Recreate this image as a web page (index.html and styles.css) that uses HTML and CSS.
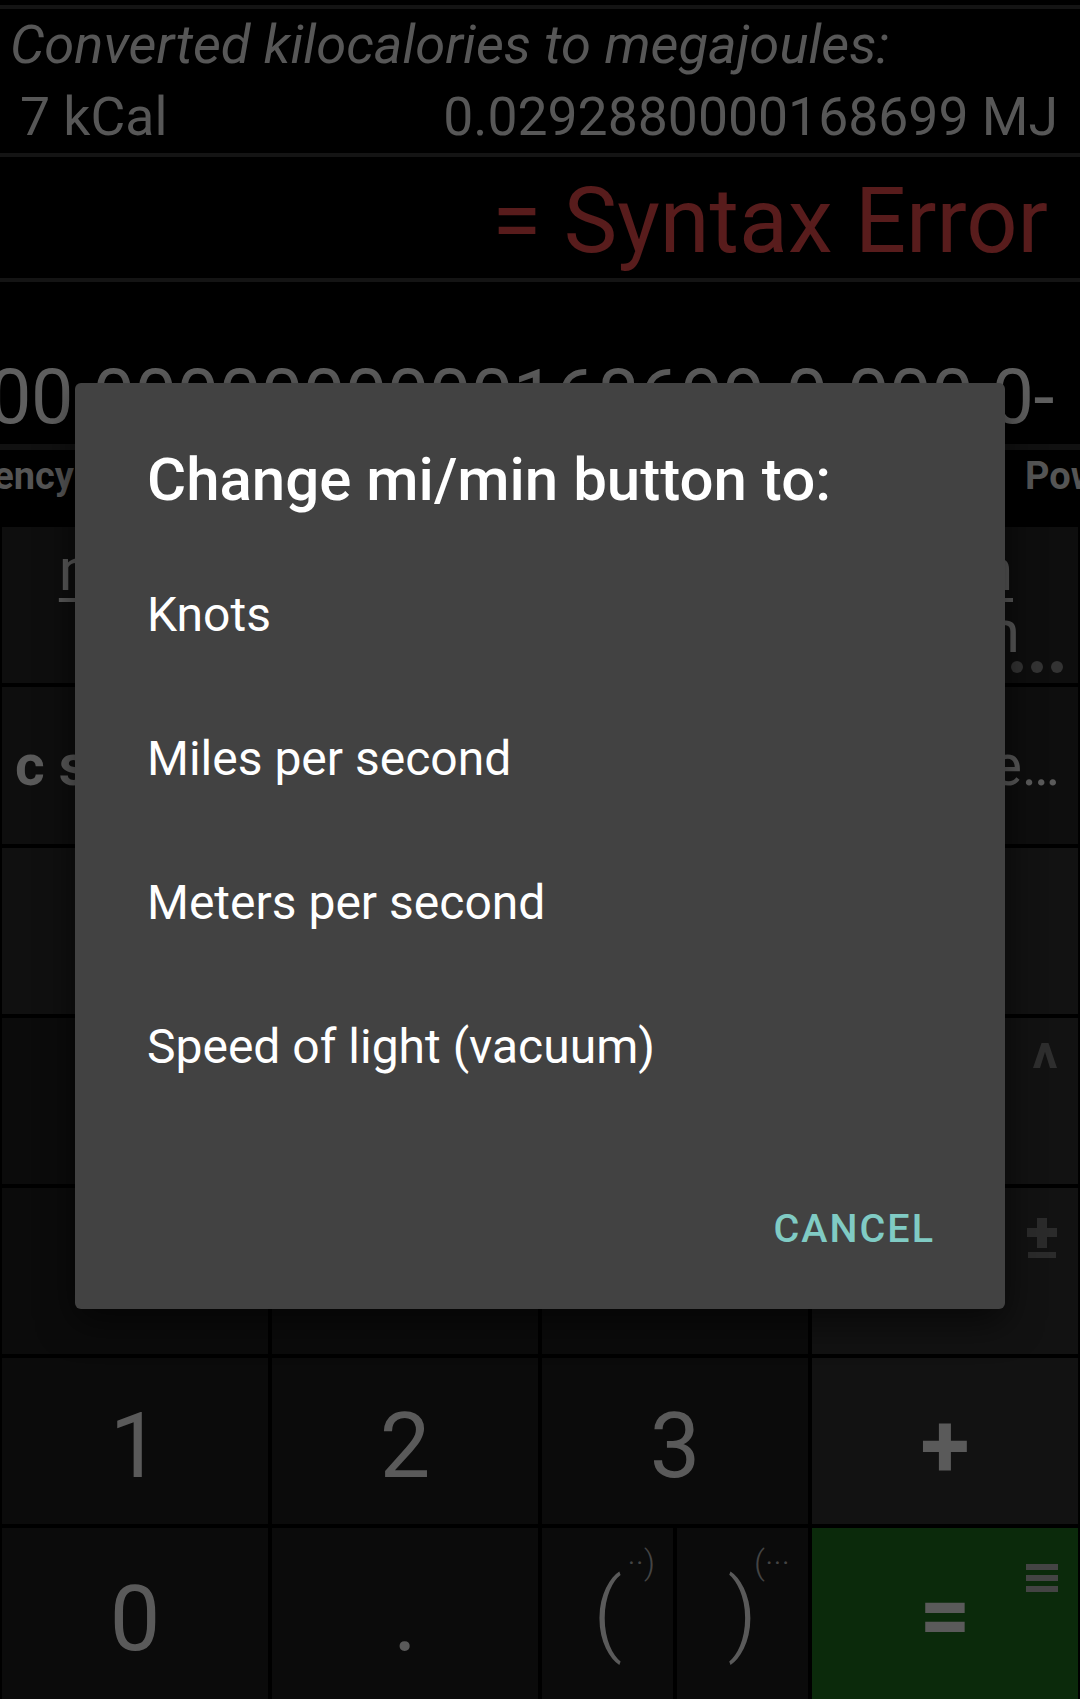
FILE: index.html
```html
<!DOCTYPE html>
<html>
<head>
<meta charset="utf-8">
<link rel="stylesheet" href="styles.css">
</head>
<body>
<div class="screen">
  <div class="topline"></div>
  <section class="history">
    <div class="hist-title">Converted kilocalories to megajoules:</div>
    <div class="hist-row"><span>7 kCal</span><span>0.0292880000168699 MJ</span></div>
  </section>
  <div class="result">= Syntax Error</div>
  <div class="expr"><span class="expr-text">100.0000000000168699-0.000 0-</span></div>
  <nav class="tabs">
    <div class="tab-clip tab-left"><span>Frequency</span></div>
    <div class="tab-clip tab-right"><span>Power</span></div>
  </nav>
  <div class="keys">
    <div class="key fn"><span class="unit unit-left"><u>mi/min</u><br>mi/h</span></div>
    <div class="key fn"><span class="unit">km/h</span></div>
    <div class="key fn"><span class="unit">m/s</span></div>
    <div class="key fn"><span class="unit unit-right"><u class="first">km/h</u><span>km/min</span></span>
      <svg class="more" width="52" height="12" viewBox="0 0 52 12"><circle cx="6" cy="6" r="6" fill="#333"/><circle cx="26" cy="6" r="6" fill="#333"/><circle cx="46" cy="6" r="6" fill="#333"/></svg>
    </div>

    <div class="key fn start"><span class="label label-left">c speed…</span></div>
    <div class="key fn"><span class="label">Mach</span></div>
    <div class="key fn"><span class="label">knots</span></div>
    <div class="key fn end"><span class="label label-right">Relative…</span></div>

    <div class="key fn2"><span class="digit">C</span></div>
    <div class="key fn2"><span class="digit">%</span></div>
    <div class="key fn2"><span class="digit">⌫</span></div>
    <div class="key op"><span class="digit bold">÷</span></div>

    <div class="key num"><span class="digit">7</span></div>
    <div class="key num"><span class="digit">8</span></div>
    <div class="key num"><span class="digit">9</span></div>
    <div class="key op"><span class="digit bold">×</span>
      <svg class="corner caret" width="24" height="25" viewBox="0 0 24 25"><polygon points="0,25 8.5,0 15.5,0 24,25 17,25 12,9 7,25" fill="#2e2e2e"/></svg>
    </div>

    <div class="key num"><span class="digit">4</span></div>
    <div class="key num"><span class="digit">5</span></div>
    <div class="key num"><span class="digit">6</span></div>
    <div class="key op"><span class="digit bold">−</span>
      <svg class="corner pm" width="30" height="40" viewBox="0 0 30 40"><rect x="10" y="0" width="10" height="30" fill="#2b2b2b"/><rect x="0" y="10" width="30" height="9" fill="#2b2b2b"/><rect x="1" y="34" width="28" height="7" fill="#2b2b2b"/></svg>
    </div>

    <div class="key num"><span class="digit">1</span></div>
    <div class="key num"><span class="digit">2</span></div>
    <div class="key num"><span class="digit">3</span></div>
    <div class="key op"><span class="digit bold">+</span></div>

    <div class="key num"><span class="digit">0</span></div>
    <div class="key num"><span class="digit">.</span></div>
    <div class="key split">
      <div class="key num paren"><span class="digit light">(</span><span class="sup">··)</span></div>
      <div class="key num paren"><span class="digit light">)</span><span class="sup">(···</span></div>
    </div>
    <div class="key eq"><span class="digit bold eqsign">=</span>
      <svg class="menu" width="32" height="28" viewBox="0 0 32 28"><rect x="0" y="0" width="32" height="6" fill="#444"/><rect x="0" y="11" width="32" height="6" fill="#444"/><rect x="0" y="22" width="32" height="6" fill="#444"/></svg>
    </div>
  </div>

  <div class="dialog">
    <div class="dlg-title">Change mi/min button to:</div>
    <ul class="dlg-list">
      <li>Knots</li>
      <li>Miles per second</li>
      <li>Meters per second</li>
      <li>Speed of light (vacuum)</li>
    </ul>
    <div class="dlg-buttons"><span class="dlg-btn">CANCEL</span></div>
  </div>
</div>
</body>
</html>
```

FILE: styles.css
```css
* { box-sizing: border-box; margin: 0; padding: 0; }
html, body { background: #000; }
body { width: 1080px; height: 1699px; overflow: hidden; font-family: Roboto, "Liberation Sans", sans-serif; }

.screen { position: relative; width: 1080px; height: 1699px; background: #000; overflow: hidden; }

.topline { margin-top: 1px; height: 8px; border-bottom: 4px solid #141414; }

.history { height: 148px; border-bottom: 4px solid #141414; color: #575757; }
.hist-title { font-style: italic; font-size: 54.3px; line-height: 72px; padding-left: 10px; white-space: nowrap; }
.hist-row { display: flex; justify-content: space-between; font-size: 53.5px; line-height: 72px; padding: 0 22px 0 20px; white-space: nowrap; }

.result { height: 125px; border-bottom: 4px solid #141414; text-align: right; font-size: 90px; line-height: 114px; padding: 8px 32px 0 0; color: #581c1c; white-space: nowrap; }

.expr { height: 168px; display: flex; justify-content: flex-end; overflow: hidden; padding: 66px 26px 0 0; border-bottom: 6px solid #111; }
.expr-text { font-size: 75.5px; line-height: 98px; letter-spacing: -0.4px; color: #5f5f5f; white-space: nowrap; }

.tabs { height: 77px; display: flex; justify-content: space-between; align-items: flex-start; }
.tab-clip { display: flex; overflow: hidden; height: 52px; font-weight: 700; font-size: 38px; line-height: 52px; color: #555; white-space: nowrap; }
.tab-left { width: 74px; justify-content: flex-end; }
.tab-right { width: 58px; justify-content: flex-start; }
.tab-right span { padding-left: 3px; }

.keys { display: grid; grid-template-columns: repeat(4, 1fr); grid-template-rows: 156px 157px 166px 166px 166px 166px 1fr; gap: 4px; padding: 0 2px; height: 1172px; }

.key { position: relative; display: flex; align-items: center; justify-content: center; overflow: hidden; color: #5a5a5a; }
.key.start { justify-content: flex-start; }
.key.end { justify-content: flex-end; }
.fn { background: #0e0e0e; }
.fn2 { background: #101010; }
.num { background: #0b0b0b; }
.op { background: #121212; }
.eq { background: #0b2a0b; }
.split { display: grid; grid-template-columns: 1fr 1fr; gap: 4px; background: #000; }

.unit { font-size: 60px; line-height: 62px; text-align: center; white-space: nowrap; }
.unit u { text-decoration-thickness: 4px; text-underline-offset: 8px; }
.unit-left { align-self: flex-start; margin-top: 12px; margin-left: 40px; }
.unit-right { align-self: flex-start; margin-top: 12px; display: flex; flex-direction: column; align-items: flex-end; position: absolute; right: 58px; }
.unit-right .first { margin-right: 7px; }
.more { position: absolute; right: 15px; bottom: 10px; }
.label { font-size: 57px; white-space: nowrap; flex-shrink: 0; }
.label-left { font-weight: 700; padding-left: 13px; }
.label-right { padding-right: 18px; }

.digit { font-size: 90px; line-height: 1; }
.num .digit, .op .digit { margin-top: 12px; }
.digit.bold { font-weight: 700; }
.digit.light { font-weight: 300; }
.eqsign { margin-top: 4px; }
.corner { position: absolute; }
.caret { top: 25px; right: 21px; }
.pm { top: 30px; right: 21px; }
.paren { height: 100%; }
.paren .digit { margin-top: 0; }
.sup { position: absolute; top: 14px; right: 18px; font-size: 34px; color: #444; font-weight: 300; }
.menu { position: absolute; top: 36px; right: 20px; }

.dialog { position: absolute; left: 75px; top: 383px; width: 930px; height: 926px; background: #424242; border-radius: 6px; box-shadow: 0 12px 36px rgba(0,0,0,0.6); padding: 65px 70px 41px 72px; display: flex; flex-direction: column; color: #fff; }
.dlg-title { font-weight: 500; font-size: 60px; line-height: 64px; white-space: nowrap; }
.dlg-list { list-style: none; margin-top: 31px; }
.dlg-list li { height: 144px; line-height: 144px; font-size: 48px; white-space: nowrap; }
.dlg-buttons { margin-top: auto; display: flex; justify-content: flex-end; height: 80px; align-items: center; }
.dlg-btn { font-weight: 500; font-size: 39.5px; letter-spacing: 2px; color: #80cbc4; }
```
